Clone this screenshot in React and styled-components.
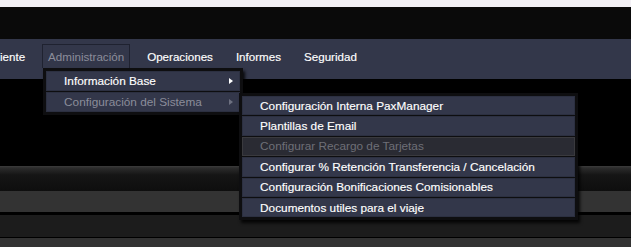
import React from "react";
import styled, { createGlobalStyle } from "styled-components";

const GlobalStyle = createGlobalStyle`
  html, body {
    margin: 0;
    padding: 0;
    background: #000;
    overflow: hidden;
  }
  body {
    font-family: "Liberation Sans", Arial, sans-serif;
    font-size: 12px;
  }
`;

const Page = styled.div`
  width: 631px;
  height: 247px;
  overflow: hidden;
  display: flex;
  flex-direction: column;
  background: #000;

  & > * {
    flex-shrink: 0;
  }
`;

const TopStrip = styled.div`
  height: 7px;
  background: #f3f0f5;
`;

const Header = styled.div`
  height: 32px;
  background: #0a0a0a;
`;

const NavBar = styled.nav`
  height: 40px;
  box-sizing: border-box;
  padding-top: 5px;
  background: #33374a;
  display: flex;
  align-items: flex-start;
  position: relative;
  z-index: 2;
`;

const NavList = styled.ul`
  list-style: none;
  margin: 0 0 0 -17px;
  padding: 0;
  display: flex;
  gap: 11px;
  font-size: 11.6px;
`;

const NavItem = styled.li`
  position: relative;
  box-sizing: border-box;
  height: 24px;
  padding: 0 5px;
  display: flex;
  align-items: center;
  white-space: nowrap;
  color: ${(p) => (p.$open ? "#8b8d9a" : "#ffffff")};
  -webkit-text-stroke: ${(p) => (p.$open ? "0" : "0.15px")};
  border: 1px solid ${(p) => (p.$open ? "#1f2230" : "transparent")};
  border-bottom: none;
`;

const Menu = styled.ul`
  list-style: none;
  margin: 0;
  position: absolute;
  background: #0e0e10;
  padding: 3px;
  display: flex;
  flex-direction: column;
  gap: 1px;
  box-shadow: 2px 3px 3px rgba(0, 0, 0, 0.85);
  font-size: 11.8px;
`;

const MainMenu = styled(Menu)`
  top: 23px;
  left: 0;
  width: 194px;
`;

const SubMenu = styled(Menu)`
  top: 0;
  left: 100%;
  width: 333px;
  z-index: 3;
`;

const MenuRow = styled.li`
  position: relative;
  box-sizing: border-box;
  height: ${(p) => p.$h || 20}px;
  display: flex;
  align-items: center;
  padding-left: 17px;
  white-space: nowrap;
  background: ${(p) => (p.$disabled ? "#2a2b33" : "#33374a")};
  border: 1px solid ${(p) => (p.$disabled ? "#3a3a3e" : "#2c3041")};
  color: ${(p) => (p.$dim ? "#8b8d9a" : p.$disabled ? "#6e6f77" : "#ffffff")};
  -webkit-text-stroke: ${(p) => (p.$dim || p.$disabled ? "0" : "0.15px")};
`;

const Arrow = styled.span`
  position: absolute;
  right: 6px;
  top: 50%;
  margin-top: -3px;
  width: 0;
  height: 0;
  border-top: 3px solid transparent;
  border-bottom: 3px solid transparent;
  border-left: 4px solid ${(p) => (p.$dim ? "#6d7080" : "#ffffff")};
`;

const Content = styled.div`
  height: 87px;
  background: #000;
`;

const Toolbar = styled.div`
  height: 25px;
  background: linear-gradient(
    #3c3c3c 0,
    #2c2c2c 2px,
    #151515 9px,
    #0e0e0e 100%
  );
`;

const Band = styled.div`
  height: ${(p) => p.$h}px;
  background: ${(p) => p.$bg};
  border-bottom: ${(p) => (p.$line ? `${p.$line}px solid #000` : "none")};
`;

const subItems = [
  { label: "Configuración Interna PaxManager" },
  { label: "Plantillas de Email" },
  { label: "Configurar Recargo de Tarjetas", disabled: true },
  { label: "Configurar % Retención Transferencia / Cancelación" },
  { label: "Configuración Bonificaciones Comisionables" },
  { label: "Documentos utiles para el viaje" },
];

const App = () => {
  return (
    <Page>
      <GlobalStyle />
      <TopStrip />
      <Header />
      <NavBar>
        <NavList>
          <NavItem>Cliente</NavItem>
          <NavItem $open>
            Administración
            <MainMenu>
              <MenuRow>
                Información Base
                <Arrow />
              </MenuRow>
              <MenuRow $dim>
                Configuración del Sistema
                <Arrow $dim />
                <SubMenu>
                  {subItems.map((item) => (
                    <MenuRow
                      key={item.label}
                      $h={19.4}
                      $disabled={item.disabled}
                    >
                      {item.label}
                    </MenuRow>
                  ))}
                </SubMenu>
              </MenuRow>
            </MainMenu>
          </NavItem>
          <NavItem>Operaciones</NavItem>
          <NavItem>Informes</NavItem>
          <NavItem>Seguridad</NavItem>
        </NavList>
      </NavBar>
      <Content />
      <Toolbar />
      <Band $h={21} $bg="#333333" $line={3} />
      <Band $h={22} $bg="#1c1c1c" $line={1} />
      <Band $h={20} $bg="#333333" />
    </Page>
  );
};

export default App;
